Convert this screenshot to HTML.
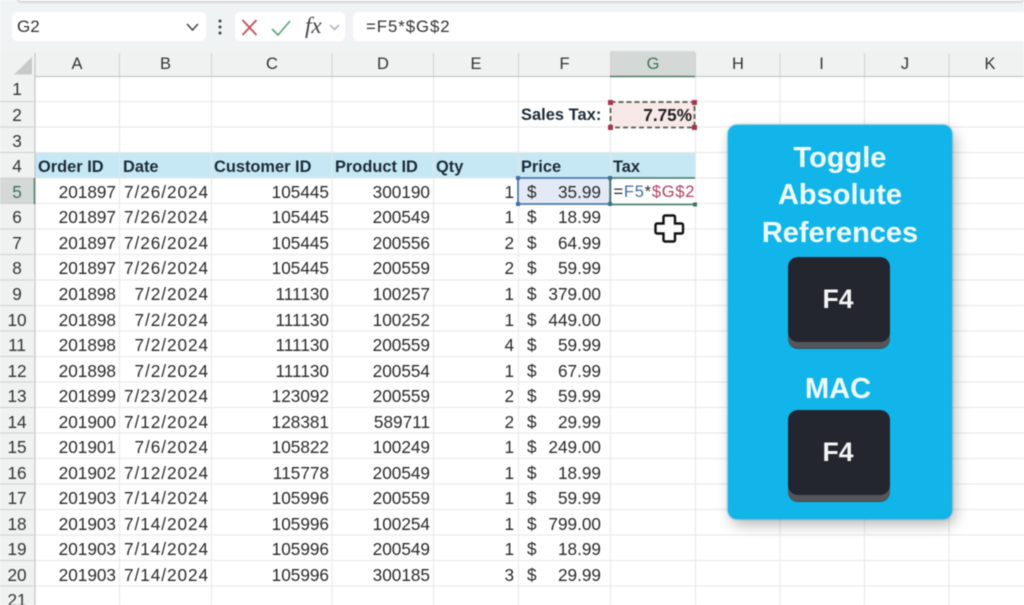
<!DOCTYPE html>
<html><head><meta charset="utf-8"><style>
html,body{margin:0;padding:0;background:#fff}
body{width:1024px;height:605px;overflow:hidden;position:relative;font-family:"Liberation Sans",sans-serif;color:#2a2a2a}
#w{left:0;top:0;width:1024px;height:605px;overflow:hidden;background:#fff;filter:blur(.4px)}
div,span,svg{position:absolute}
.r{left:0;width:1024px;height:25.5px;line-height:27.5px;font-size:17.2px;white-space:nowrap}
.r span{top:0;text-align:right}
.n{left:0;width:34px;text-align:center!important;color:#333}
.a{left:35px;width:81px}
.b{left:120px;width:89px;letter-spacing:.95px}
.c{left:212px;width:117px}
.d{left:333px;width:97px}
.e{left:434px;width:80px}
.s{left:527px;width:14px;text-align:left!important}
.f{left:530px;width:71px}
.h{top:51px;height:25px;line-height:26px;font-size:16.5px;text-align:center;color:#333}
.t{font-weight:bold;color:#1d2b38;font-size:16.4px}
.hd span.t{top:1px}
.card{left:728px;top:125px;width:224px;height:394px;border-radius:9px;background:#12b5e9;box-shadow:0 0 2px #0f8fb8,3px 6px 14px rgba(0,0,0,.28)}
.ct{left:0;width:224px;text-align:center;color:#effcff;font-weight:bold;font-size:29px;line-height:36px;height:36px}
.key{left:60px;width:102px;height:85px;background:#23252f;border-radius:10px;box-shadow:0 6px 0 #55565a,0 7px 0 #3a4a55;color:#f4f4f4;font-weight:bold;font-size:26.5px;line-height:84px;text-align:center;text-indent:-2px}
</style></head><body><div id="w">
<div style="left:0;top:0;width:1024px;height:51px;background:#f0f3f4"></div>
<div style="left:17px;top:-6px;width:1007px;height:7px;background:#fff;border-radius:0 0 4px 4px;box-shadow:0 1px 2px #bbb"></div>
<div style="left:12px;top:12px;width:194px;height:29px;background:#fff;border-radius:5px;font-size:17px;line-height:30px;text-indent:5px;color:#333">G2</div>
<svg style="left:0;top:0" width="400" height="51" fill="none">
<path d="M187 24l5.500 6 5.500-6" stroke="#444" stroke-width="1.500"/>
<circle cx="220" cy="21" r="1.500" fill="#444"/><circle cx="220" cy="27" r="1.500" fill="#444"/><circle cx="220" cy="33" r="1.500" fill="#444"/>
</svg>
<div style="left:235px;top:12px;width:110px;height:29px;background:#fff;border-radius:5px"></div>
<div style="left:353px;top:12px;width:671px;height:29px;background:#fff;border-radius:5px 0 0 5px;font-size:16.8px;line-height:30px;text-indent:13px;color:#333;letter-spacing:.95px">=F5*$G$2</div>
<svg style="left:235px;top:12px" width="110" height="29" fill="none">
<path d="M7.500 8l14 15M21.500 8l-14 15" stroke="#c8505f" stroke-width="1.900"/>
<path d="M37 17l6 6 12-14" stroke="#5fa87c" stroke-width="1.700"/>
<path d="M95 13l4.500 4.500 4.500-4.500" stroke="#aaa" stroke-width="1.400"/>
</svg>
<span style="left:305px;top:13px;font:italic 23px 'Liberation Serif',serif;color:#444;line-height:26px">fx</span>

<div style="left:0;top:51px;width:1024px;height:25px;background:#f0f1f1"></div>
<div style="left:0;top:76px;width:35px;height:529px;background:#f0f1f1"></div>
<div style="left:610px;top:51px;width:85px;height:25px;background:#d4d8d6"></div>
<div style="left:0;top:178px;width:34px;height:26px;background:#d4d8d6"></div>
<div style="left:35px;top:153px;width:660px;height:25px;background:#c6e8f5"></div>
<div style="left:610px;top:102px;width:85px;height:25px;background:#f9e8e8"></div>
<div style="left:519px;top:179px;width:91px;height:25px;background:#e3eaf6"></div>

<svg style="left:0;top:51px" width="1024" height="554" fill="none">
<g stroke="#e6e7e7" stroke-width="1">
<path d="M35 50.500H1024M35 76H1024M35 101.500H1024M35 127H1024M35 152.500H1024M35 178H1024M35 203.500H1024M35 229H1024M35 254.500H1024M35 280H1024M35 305.500H1024M35 331H1024M35 356.500H1024M35 382H1024M35 407.500H1024M35 433H1024M35 458.500H1024M35 484H1024M35 509.500H1024M35 535H1024"/>
<path d="M119.500 25V554M211.500 25V554M332 25V554M433.500 25V554M518.500 25V554M610.500 25V554M695.500 25V554M780 25V554M864.500 25V554M949 25V554"/>
</g>
<g stroke="#d0d1d1" stroke-width="1">
<path d="M0 50.500H34M0 76H34M0 101.500H34M0 127H34M0 152.500H34M0 178H34M0 203.500H34M0 229H34M0 254.500H34M0 280H34M0 305.500H34M0 331H34M0 356.500H34M0 382H34M0 407.500H34M0 433H34M0 458.500H34M0 484H34M0 509.500H34M0 535H34"/>
<path d="M119.500 2V25M211.500 2V25M332 2V25M433.500 2V25M518.500 2V25M610.500 2V25M695.500 2V25M780 2V25M864.500 2V25M949 2V25"/>
</g>
<path d="M35 2V554" stroke="#bcbdbd"/>
<path d="M35 25.500H1024" stroke="#bcbdbd"/>
<path d="M610 25.500H695" stroke="#4f7f68" stroke-width="1.600"/>
<path d="M34.500 127V153" stroke="#4f7f68" stroke-width="1.600"/>
<path d="M14 23.500L32 6V23.500Z" fill="#c8caca"/>
</svg>

<div class="h" style="left:35px;width:84px">A</div><div class="h" style="left:120px;width:91px">B</div><div class="h" style="left:212px;width:120px">C</div><div class="h" style="left:333px;width:100px">D</div><div class="h" style="left:434px;width:84px">E</div><div class="h" style="left:519px;width:91px">F</div><div class="h" style="left:611px;width:84px;color:#3f7360">G</div><div class="h" style="left:696px;width:84px">H</div><div class="h" style="left:780px;width:83px">I</div><div class="h" style="left:863px;width:84px">J</div><div class="h" style="left:948px;width:84px">K</div>

<div class="r" style="top:75.500px"><span class="n">1</span></div>
<div class="r" style="top:102px"><span class="n">2</span><span class="t" style="left:521px;width:90px;text-align:left;letter-spacing:.05px">Sales Tax:</span><span style="left:611px;width:81px;font-weight:bold;color:#222">7.75%</span></div>
<div class="r" style="top:127.500px"><span class="n">3</span></div>
<div class="r hd" style="top:153px"><span class="n">4</span><span class="t" style="left:38px;width:80px;text-align:left">Order ID</span><span class="t" style="left:123px;width:80px;text-align:left">Date</span><span class="t" style="left:214px;width:115px;text-align:left">Customer ID</span><span class="t" style="left:335px;width:95px;text-align:left">Product ID</span><span class="t" style="left:436px;width:60px;text-align:left">Qty</span><span class="t" style="left:521px;width:60px;text-align:left">Price</span><span class="t" style="left:613px;width:60px;text-align:left">Tax</span></div>
<div class="r" style="top:178.500px"><span class="n" style="color:#3f7360">5</span><span class="a">201897</span><span class="b">7/26/2024</span><span class="c">105445</span><span class="d">300190</span><span class="e">1</span><span class="s">$</span><span class="f">35.99</span><span style="left:613.500px;width:82px;text-align:left;font-size:16.5px;letter-spacing:.75px">=<span style="position:static;color:#3f6d9e">F5</span>*<span style="position:static;color:#b0405c">$G$2</span></span></div>
<div class="r" style="top:204px"><span class="n">6</span><span class="a">201897</span><span class="b">7/26/2024</span><span class="c">105445</span><span class="d">200549</span><span class="e">1</span><span class="s">$</span><span class="f">18.99</span></div>
<div class="r" style="top:229.500px"><span class="n">7</span><span class="a">201897</span><span class="b">7/26/2024</span><span class="c">105445</span><span class="d">200556</span><span class="e">2</span><span class="s">$</span><span class="f">64.99</span></div>
<div class="r" style="top:255px"><span class="n">8</span><span class="a">201897</span><span class="b">7/26/2024</span><span class="c">105445</span><span class="d">200559</span><span class="e">2</span><span class="s">$</span><span class="f">59.99</span></div>
<div class="r" style="top:280.500px"><span class="n">9</span><span class="a">201898</span><span class="b">7/2/2024</span><span class="c">111130</span><span class="d">100257</span><span class="e">1</span><span class="s">$</span><span class="f">379.00</span></div>
<div class="r" style="top:306.500px"><span class="n">10</span><span class="a">201898</span><span class="b">7/2/2024</span><span class="c">111130</span><span class="d">100252</span><span class="e">1</span><span class="s">$</span><span class="f">449.00</span></div>
<div class="r" style="top:332px"><span class="n">11</span><span class="a">201898</span><span class="b">7/2/2024</span><span class="c">111130</span><span class="d">200559</span><span class="e">4</span><span class="s">$</span><span class="f">59.99</span></div>
<div class="r" style="top:357.500px"><span class="n">12</span><span class="a">201898</span><span class="b">7/2/2024</span><span class="c">111130</span><span class="d">200554</span><span class="e">1</span><span class="s">$</span><span class="f">67.99</span></div>
<div class="r" style="top:383px"><span class="n">13</span><span class="a">201899</span><span class="b">7/23/2024</span><span class="c">123092</span><span class="d">200559</span><span class="e">2</span><span class="s">$</span><span class="f">59.99</span></div>
<div class="r" style="top:408.500px"><span class="n">14</span><span class="a">201900</span><span class="b">7/12/2024</span><span class="c">128381</span><span class="d">589711</span><span class="e">2</span><span class="s">$</span><span class="f">29.99</span></div>
<div class="r" style="top:434px"><span class="n">15</span><span class="a">201901</span><span class="b">7/6/2024</span><span class="c">105822</span><span class="d">100249</span><span class="e">1</span><span class="s">$</span><span class="f">249.00</span></div>
<div class="r" style="top:459.500px"><span class="n">16</span><span class="a">201902</span><span class="b">7/12/2024</span><span class="c">115778</span><span class="d">200549</span><span class="e">1</span><span class="s">$</span><span class="f">18.99</span></div>
<div class="r" style="top:485px"><span class="n">17</span><span class="a">201903</span><span class="b">7/14/2024</span><span class="c">105996</span><span class="d">200559</span><span class="e">1</span><span class="s">$</span><span class="f">59.99</span></div>
<div class="r" style="top:510.500px"><span class="n">18</span><span class="a">201903</span><span class="b">7/14/2024</span><span class="c">105996</span><span class="d">100254</span><span class="e">1</span><span class="s">$</span><span class="f">799.00</span></div>
<div class="r" style="top:536px"><span class="n">19</span><span class="a">201903</span><span class="b">7/14/2024</span><span class="c">105996</span><span class="d">200549</span><span class="e">1</span><span class="s">$</span><span class="f">18.99</span></div>
<div class="r" style="top:561.500px"><span class="n">20</span><span class="a">201903</span><span class="b">7/14/2024</span><span class="c">105996</span><span class="d">300185</span><span class="e">3</span><span class="s">$</span><span class="f">29.99</span></div>
<div class="r" style="top:586.500px"><span class="n">21</span></div>

<svg style="left:500px;top:90px" width="210" height="170" fill="none">
<rect x="110.500" y="12" width="84" height="25.500" stroke="#55604f" stroke-width="1.800" stroke-dasharray="5 3"/>
<g fill="#a8344c"><rect x="108" y="10" width="5" height="5"/><rect x="192" y="10" width="5" height="5"/><rect x="108" y="35" width="5" height="5"/><rect x="192" y="35" width="5" height="5"/></g>
<rect x="18" y="88" width="92" height="26" stroke="#3f6fa8" stroke-width="1.600"/>
<g fill="#3f6fa8"><rect x="16" y="86" width="4" height="4"/><rect x="108" y="86" width="4" height="4"/><rect x="16" y="112" width="4" height="4"/><rect x="108" y="112" width="4" height="4"/></g>
<path d="M110.500 88H195M110.500 114.500H195M110.500 88V114.500" stroke="#3f7360" stroke-width="1.500"/>
<rect x="193" y="112.500" width="4" height="4" fill="#3f7360"/>
<path d="M165 125.500h8.500a1.500 1.500 0 0 1 1.500 1.500v6.500h6.500a1.500 1.500 0 0 1 1.500 1.500v7a1.500 1.500 0 0 1-1.500 1.500H175v6.500a1.500 1.500 0 0 1-1.500 1.500H165a1.500 1.500 0 0 1-1.500-1.500v-6.500H157a1.500 1.500 0 0 1-1.500-1.500v-7a1.500 1.500 0 0 1 1.500-1.500h6.500V127a1.500 1.500 0 0 1 1.500-1.500Z" fill="#fff" stroke="#111" stroke-width="2.400"/>
</svg>

<div class="card">
<div class="ct" style="top:15px">Toggle</div>
<div class="ct" style="top:52px">Absolute</div>
<div class="ct" style="top:90px">References</div>
<div class="key" style="top:132px">F4</div>
<div class="ct" style="top:246px;text-indent:-4px">MAC</div>
<div class="key" style="top:285px">F4</div>
</div>
</div></body></html>
